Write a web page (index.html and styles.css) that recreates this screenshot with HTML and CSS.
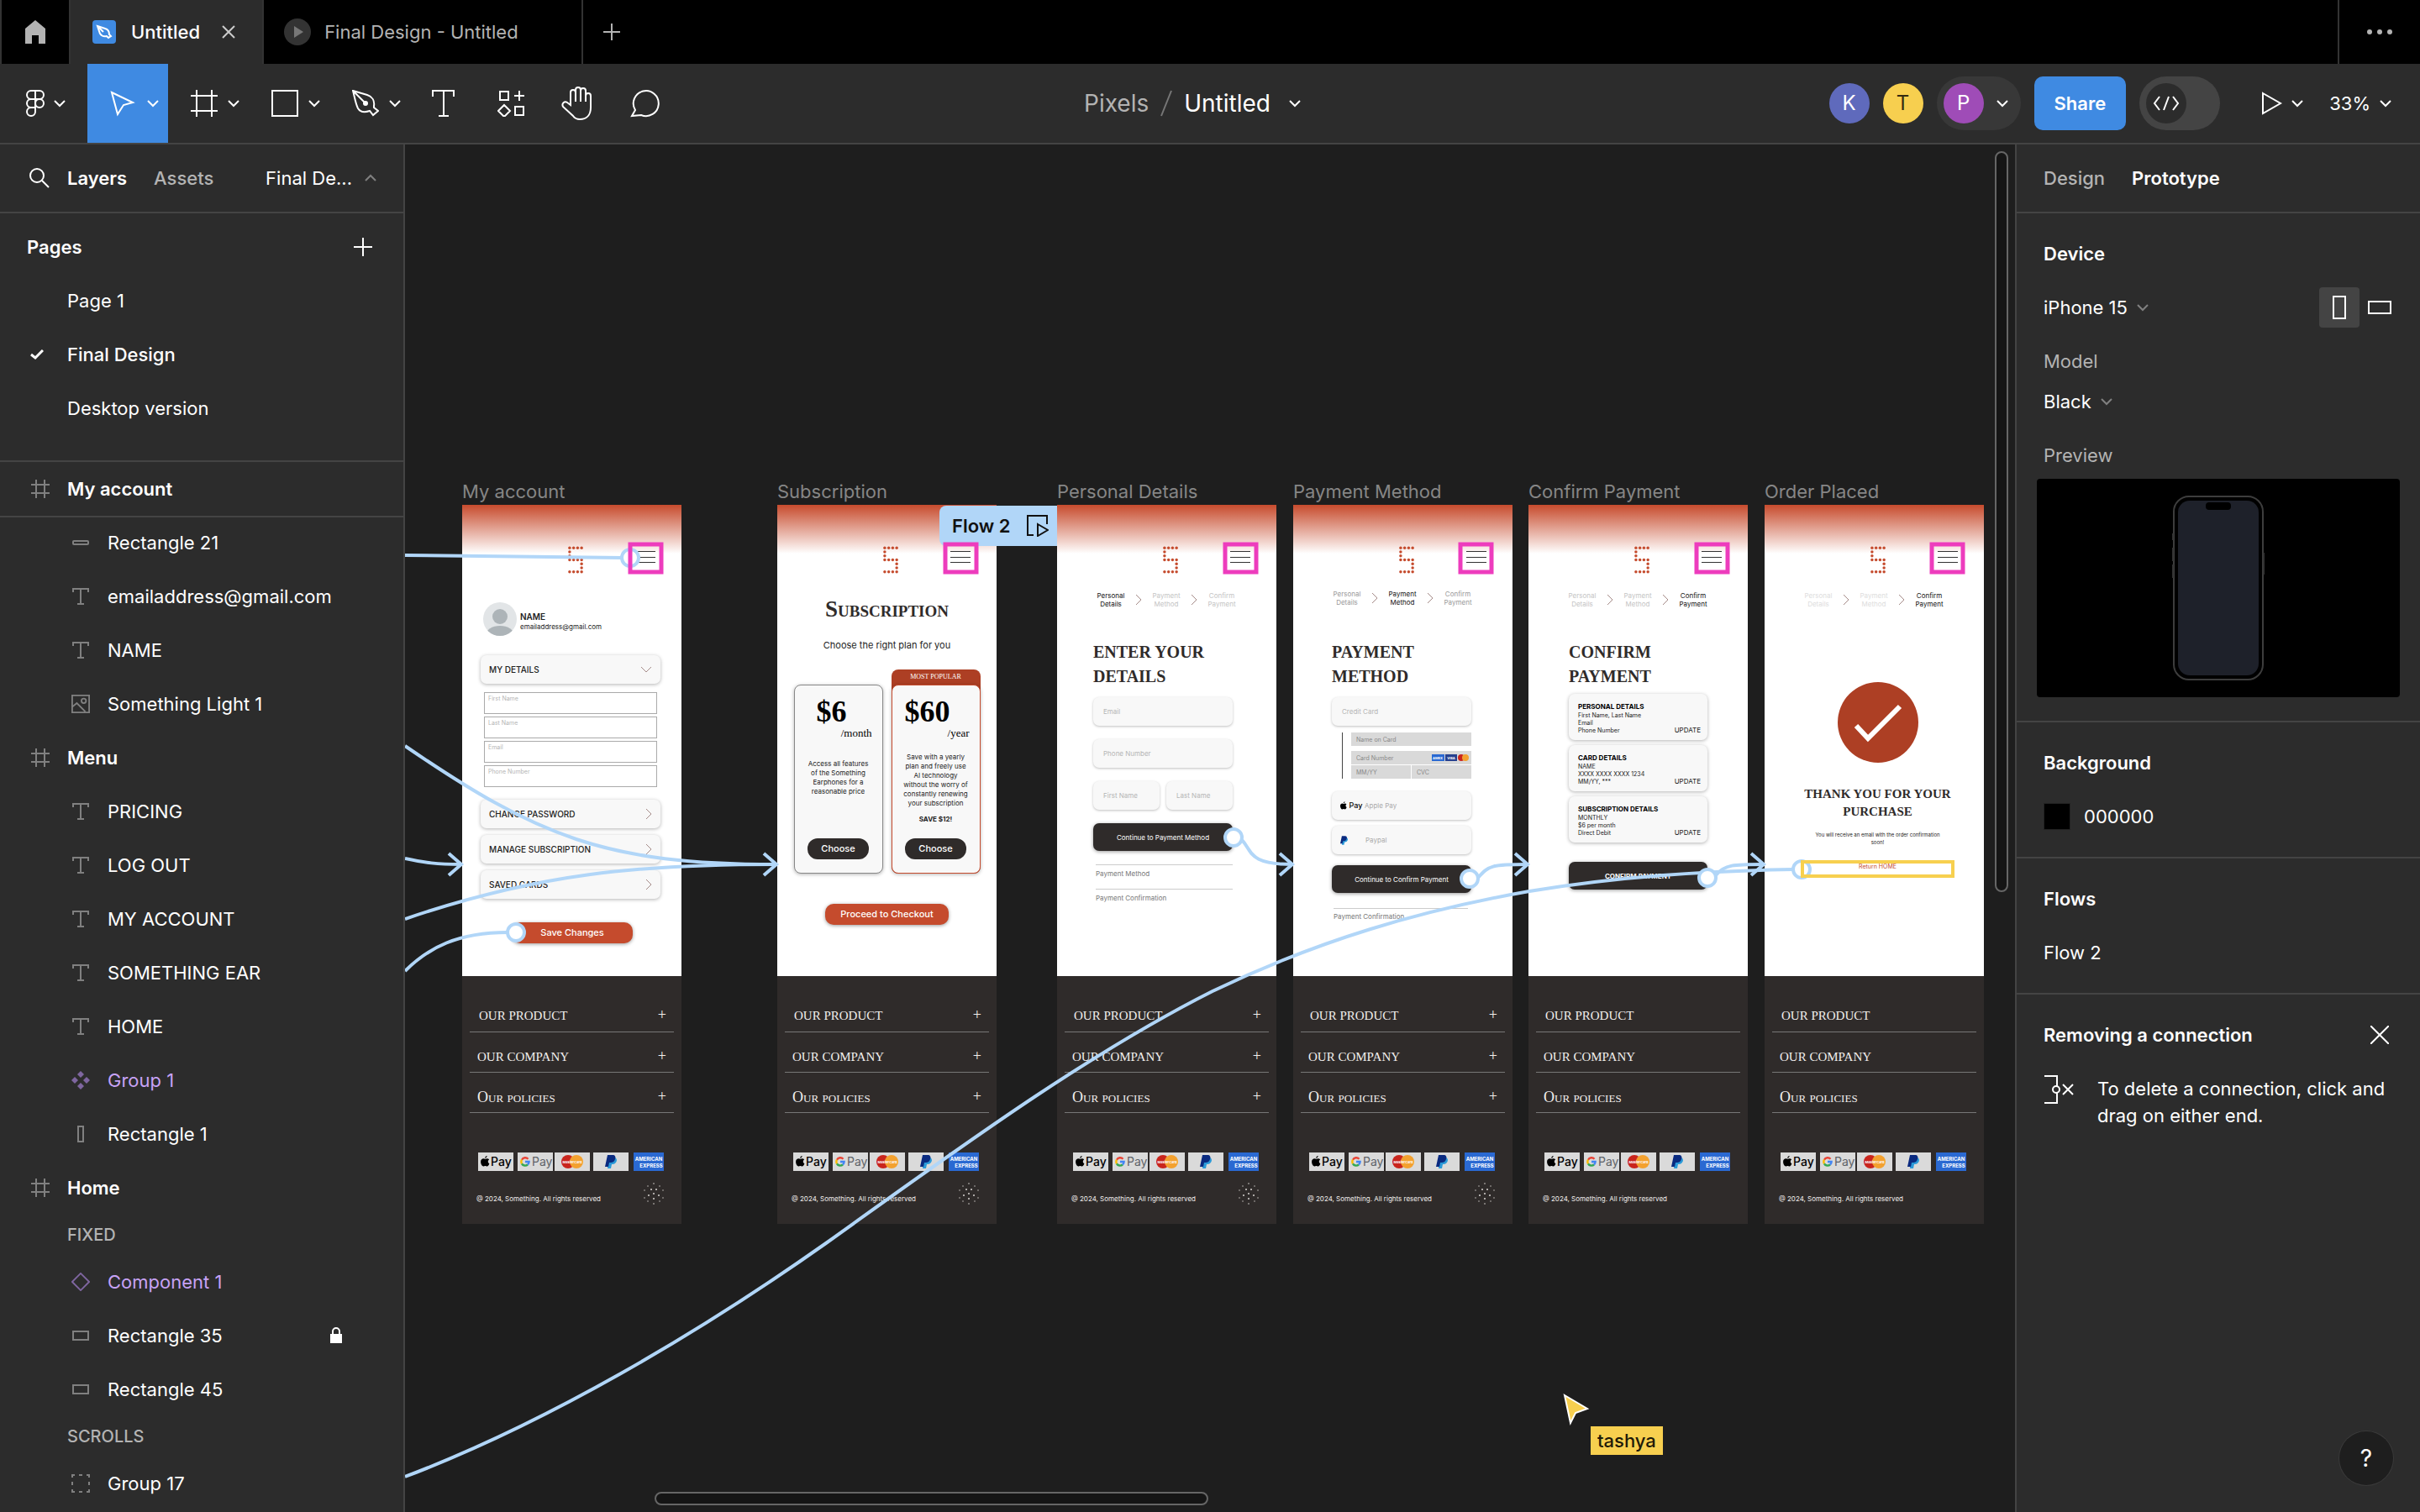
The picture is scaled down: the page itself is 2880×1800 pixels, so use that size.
FILE: index.html
```html
<!DOCTYPE html>
<html lang="en">
<head>
    <meta charset="UTF-8">
    <title>Untitled</title>
    <link rel="stylesheet" href="styles.css">
</head>
<body>
    <svg class="sprite" aria-hidden="true">
        <symbol id="chevron" viewBox="0 0 14 14"><path d="M1 4l6 6 6-6"/></symbol>
        <symbol id="chevron-up" viewBox="0 0 14 14"><path d="M1 10l6-6 6 6"/></symbol>
        <symbol id="figma" viewBox="0 0 32 32"><path d="M16 1h-5a5 5 0 0 0 0 10h5zM16 1h5a5 5 0 0 1 0 10h-5zM16 11h-5a5 5 0 0 0 0 10h5zM21 11a5 5 0 1 1 0 10a5 5 0 1 1 0-10zM16 21h-5a5 5 0 1 0 5 5z"/></symbol>
        <symbol id="cursor" viewBox="0 0 32 32"><path d="M2 3l25 12-11 3-7 11z"/></symbol>
        <symbol id="frame" viewBox="0 0 32 32"><path d="M7 0v32M25 0v32M0 7h32M0 25h32"/></symbol>
        <symbol id="rect" viewBox="0 0 32 32"><path d="M1 1h30v30H1z"/></symbol>
        <symbol id="pen" viewBox="0 0 32 32"><path d="M1 1l17 5c6 2 9 7 8 13v2l5 4-6 5-4-5c-6 2-11 2-14-3-3-6-4-14-6-21zM1 1l14 14"/><circle cx="16" cy="16" r="3" fill="currentColor" stroke="none"/></symbol>
        <symbol id="text" viewBox="0 0 32 32"><path d="M3 8V1h25v7M16 1v30M10 31h12"/></symbol>
        <symbol id="components" viewBox="0 0 32 32"><path d="M3 2h10v10H3zM26 1v12M20 7h12M21 20h10v10H21zM8 18l7 7-7 7-7-7z"/></symbol>
        <symbol id="hand" viewBox="0 0 40 40"><path d="M11 22V7a3 3 0 0 1 6 0v11V4a3 3 0 0 1 6 0v14V5a3 3 0 0 1 6 0v13v-7a3 3 0 0 1 6 0v14c0 9-5 14-13 14-4 0-6-1-8-4L2 24c-2-4 2-7 5-5l4 3z"/></symbol>
        <symbol id="comment" viewBox="0 0 36 36"><path d="M2 33l4-7a15 15 0 1 1 7 6z"/></symbol>
        <symbol id="layer-frame" viewBox="0 0 22 22"><path d="M6 0v22M16 0v22M0 6h22M0 16h22"/></symbol>
        <symbol id="layer-text" viewBox="0 0 22 22"><path d="M2 6V2h18v4M11 2v18M7 20h8"/></symbol>
        <symbol id="layer-line" viewBox="0 0 22 22"><rect x="2" y="9" width="18" height="4" rx="1"/></symbol>
        <symbol id="layer-image" viewBox="0 0 24 24"><path d="M1 1h22v22H1zM1 16l6-5 11 11"/><circle cx="16" cy="8" r="3"/></symbol>
        <symbol id="layer-instance" viewBox="0 0 22 22"><path d="M11 0l4 4-4 4-4-4zM11 14l4 4-4 4-4-4zM4 7l4 4-4 4-4-4zM18 7l4 4-4 4-4-4z" fill="currentColor" stroke="none"/></symbol>
        <symbol id="layer-tall" viewBox="0 0 22 22"><path d="M8 2h6v18H8z"/></symbol>
        <symbol id="layer-component" viewBox="0 0 24 24"><path d="M12 1l11 11-11 11L1 12z"/></symbol>
        <symbol id="layer-wide" viewBox="0 0 22 22"><path d="M2 6h18v10H2z"/></symbol>
        <symbol id="layer-group" viewBox="0 0 22 22"><path d="M1 4V1h3M9 1h4M18 1h3v3M21 9v4M21 18v3h-3M13 21H9M4 21H1v-3M1 13V9"/></symbol>
        <symbol id="logo-s" viewBox="0 0 20 34">
            <g fill="#c54b2d" stroke="none">
                <circle cx="2" cy="2" r="1.800"/><circle cx="7" cy="2" r="1.800"/><circle cx="12" cy="2" r="1.800"/><circle cx="17" cy="2" r="1.800"/>
                <circle cx="2" cy="7" r="1.800"/><circle cx="2" cy="12" r="1.800"/>
                <circle cx="2" cy="17" r="1.800"/><circle cx="7" cy="17" r="1.800"/><circle cx="12" cy="17" r="1.800"/><circle cx="17" cy="17" r="1.800"/>
                <circle cx="17" cy="22" r="1.800"/><circle cx="17" cy="27" r="1.800"/>
                <circle cx="2" cy="32" r="1.800"/><circle cx="7" cy="32" r="1.800"/><circle cx="12" cy="32" r="1.800"/><circle cx="17" cy="32" r="1.800"/>
            </g>
        </symbol>
        <symbol id="burger" viewBox="0 0 24 16"><path d="M0 1.500h24M0 8.500h24M0 14.500h24" stroke="#333" stroke-width="1"/></symbol>
        <symbol id="angle" viewBox="0 0 8 14"><path d="M1 1l6 6-6 6" stroke="#a58b88" stroke-width="1"/></symbol>
        <symbol id="apple" viewBox="0 0 10 12"><path d="M7 0c0 1-1 2.500-2.300 2.500C4.600 1.300 5.800.2 7 0zM9.500 8.500C9 10 8 11.500 7 11.500S5.800 11 5 11s-1.200.5-2 .5C1.500 11.500 0 9 0 6.500 0 4 1.500 3 3 3c.8 0 1.400.5 2 .5S6.300 3 7.200 3c.8 0 1.600.4 2.100 1.100-1.800 1-1.500 3.600.2 4.400z" fill="#000" stroke="none"/></symbol>
        <symbol id="paypal" viewBox="0 0 14 16"><path d="M4 3h7c3 0 3.500 3 2.500 5S11 11 9 11H8l-1 5H3z" fill="#2b9ad8" stroke="none"/><path d="M3 0h6c3 0 4 2 3 5s-3 4-5 4H5l-1 5H0z" fill="#0a2a80" stroke="none"/></symbol>
        <symbol id="mastercard" viewBox="0 0 28 18"><circle cx="9" cy="9" r="8" fill="#c9251d" stroke="none"/><circle cx="19" cy="9" r="8" fill="#f3a12f" stroke="none"/><text x="14" y="11" class="tiny-mark" text-anchor="middle">MasterCard</text></symbol>
        <symbol id="google" viewBox="0 0 12 12"><g stroke-width="2.400"><path d="M9.500 2.800A4.600 4.600 0 0 0 2 3.700" stroke="#e94335"/><path d="M2 3.700a4.600 4.600 0 0 0 0 4.600" stroke="#fabb05"/><path d="M2 8.300a4.600 4.600 0 0 0 7 1.200" stroke="#34a853"/><path d="M9 9.500A4.600 4.600 0 0 0 10.600 6H6" stroke="#4285f4"/></g></symbol>
        <symbol id="payments" viewBox="0 0 222 22">
            <g stroke="none">
                <path d="M0 0h42v22H0zM47 0h42v22H47zM91 0h42v22H91zM137 0h42v22h-42z" fill="#dadada"/>
                <path d="M185 0h36v22h-36z" fill="#2a69d2"/>
                <text x="15" y="16" class="pay-mark">Pay</text>
                <text x="64" y="16" class="pay-mark pay-mark-gray">Pay</text>
                <text x="203" y="10" class="amex-mark" text-anchor="middle">AMERICAN</text>
                <text x="206" y="18" class="amex-mark" text-anchor="middle">EXPRESS</text>
            </g>
            <use href="#apple" x="3" y="4" width="11" height="13"/>
            <use href="#google" x="50" y="5" width="12" height="12"/>
            <use href="#mastercard" x="98" y="2" width="28" height="18"/>
            <use href="#paypal" x="151" y="3" width="14" height="16"/>
        </symbol>
        <symbol id="sparkle" viewBox="0 0 24 26"><g fill="#d8d4d2" stroke="none"><circle cx="12" cy="1" r=".800"/><circle cx="5" cy="4" r=".700"/><circle cx="19" cy="4" r=".700"/><circle cx="9" cy="8" r="1"/><circle cx="15" cy="8" r="1"/><circle cx="1" cy="9" r=".700"/><circle cx="23" cy="9" r=".700"/><circle cx="12" cy="13" r="1"/><circle cx="6" cy="15" r="1"/><circle cx="18" cy="15" r="1"/><circle cx="1" cy="18" r=".700"/><circle cx="23" cy="18" r=".700"/><circle cx="12" cy="19" r="1"/><circle cx="5" cy="22" r=".700"/><circle cx="19" cy="22" r=".700"/><circle cx="12" cy="25" r=".800"/></g></symbol>
    </svg>

    <nav class="tabs">
        <button class="tab tab-home" aria-label="Home">
            <svg width="24" height="28" viewBox="0 0 24 28"><path d="M12 0l12 10v18h-8V18H8v10H0V10z" fill="#b3b3b3" stroke="none"/></svg>
        </button>
        <div class="tab tab-active">
            <svg class="file-icon" width="28" height="28" viewBox="0 0 28 28"><rect width="28" height="28" rx="4" fill="#3f8ae2" stroke="none"/><path d="M6 7l9 3c4 1 5 4 5 7l2 2-3 2-2-2c-4 1-6 0-8-3zM6 7l7 7" stroke="#fff"/></svg>
            <a href="#">Untitled</a>
            <button class="icon-button" aria-label="Close tab"><svg width="18" height="18" viewBox="0 0 18 18"><path d="M2 2l14 14M16 2L2 16"/></svg></button>
        </div>
        <div class="tab tab-second">
            <svg width="32" height="32" viewBox="0 0 32 32"><circle cx="16" cy="16" r="16" fill="#333" stroke="none"/><path d="M12 9l11 7-11 7z" fill="#777" stroke="none"/></svg>
            <a href="#">Final Design - Untitled</a>
        </div>
        <button class="tab-add" aria-label="New tab"><svg width="20" height="20" viewBox="0 0 20 20"><path d="M10 0v20M0 10h20"/></svg></button>
        <button class="tab-more" aria-label="More"><svg width="32" height="8" viewBox="0 0 32 8"><g fill="#b3b3b3" stroke="none"><circle cx="4" cy="4" r="3"/><circle cx="16" cy="4" r="3"/><circle cx="28" cy="4" r="3"/></g></svg></button>
    </nav>

    <header class="toolbar">
        <div class="tools">
            <button class="tool tool-menu" aria-label="Main menu"><svg class="i32"><use href="#figma"/></svg><svg class="i14"><use href="#chevron"/></svg></button>
            <button class="tool tool-drop tool-active" aria-label="Move"><svg class="i32"><use href="#cursor"/></svg><svg class="i14"><use href="#chevron"/></svg></button>
            <button class="tool tool-drop" aria-label="Frame"><svg class="i32"><use href="#frame"/></svg><svg class="i14"><use href="#chevron"/></svg></button>
            <button class="tool tool-drop" aria-label="Shapes"><svg class="i32"><use href="#rect"/></svg><svg class="i14"><use href="#chevron"/></svg></button>
            <button class="tool tool-drop" aria-label="Pen"><svg class="i32"><use href="#pen"/></svg><svg class="i14"><use href="#chevron"/></svg></button>
            <button class="tool" aria-label="Text"><svg class="i32"><use href="#text"/></svg></button>
            <button class="tool" aria-label="Resources"><svg class="i32"><use href="#components"/></svg></button>
            <button class="tool" aria-label="Hand"><svg class="i40"><use href="#hand"/></svg></button>
            <button class="tool" aria-label="Comment"><svg class="i36"><use href="#comment"/></svg></button>
        </div>
        <div class="file-name">
            <a class="muted" href="#">Pixels</a>
            <svg width="14" height="32" viewBox="0 0 14 32"><path d="M1 31L13 1" stroke="#777"/></svg>
            <button class="file-button">Untitled <svg class="i14"><use href="#chevron"/></svg></button>
        </div>
        <div class="actions">
            <span class="avatar avatar-k">K</span>
            <span class="avatar avatar-t">T</span>
            <button class="me"><span class="avatar avatar-p">P</span><svg class="i14"><use href="#chevron"/></svg></button>
            <button class="share">Share</button>
            <label class="dev-mode">
                <input type="checkbox" aria-label="Dev mode">
                <span class="dev-knob"><svg width="32" height="18" viewBox="0 0 32 18"><path d="M8 1L2 9l6 8M24 1l6 8-6 8M19 1l-6 16"/></svg></span>
            </label>
            <button class="drop present" aria-label="Present"><svg width="24" height="28" viewBox="0 0 24 28"><path d="M1 2l21 12L1 26z"/></svg><svg class="i14"><use href="#chevron"/></svg></button>
            <button class="drop">33% <svg class="i14"><use href="#chevron"/></svg></button>
        </div>
    </header>

    <div class="workspace">
        <aside class="panel panel-left">
            <div class="panel-head">
                <button class="icon-button" aria-label="Search"><svg width="24" height="24" viewBox="0 0 24 24"><circle cx="9" cy="9" r="8"/><path d="M15 15l8 8"/></svg></button>
                <button class="panel-tab selected">Layers</button>
                <button class="panel-tab">Assets</button>
                <button class="page-switch">Final De... <svg class="i14 dim"><use href="#chevron-up"/></svg></button>
            </div>
            <section class="pages">
                <div class="pages-title"><h2>Pages</h2><button class="icon-button" aria-label="Add page"><svg width="22" height="22" viewBox="0 0 22 22"><path d="M11 0v22M0 11h22"/></svg></button></div>
                <ul>
                    <li class="row">Page 1</li>
                    <li class="row current"><svg class="row-check" width="16" height="12" viewBox="0 0 16 12"><path d="M1 6l5 4 9-9" stroke-width="3"/></svg>Final Design</li>
                    <li class="row">Desktop version</li>
                </ul>
            </section>
            <ul class="layers">
                <li class="row top-row sticky"><svg class="i22"><use href="#layer-frame"/></svg>My account</li>
                <li class="row child"><svg class="i22"><use href="#layer-line"/></svg>Rectangle 21</li>
                <li class="row child"><svg class="i22"><use href="#layer-text"/></svg>emailaddress@gmail.com</li>
                <li class="row child"><svg class="i22"><use href="#layer-text"/></svg>NAME</li>
                <li class="row child"><svg class="i22"><use href="#layer-image"/></svg>Something Light 1</li>
                <li class="row top-row"><svg class="i22"><use href="#layer-frame"/></svg>Menu</li>
                <li class="row child"><svg class="i22"><use href="#layer-text"/></svg>PRICING</li>
                <li class="row child"><svg class="i22"><use href="#layer-text"/></svg>LOG OUT</li>
                <li class="row child"><svg class="i22"><use href="#layer-text"/></svg>MY ACCOUNT</li>
                <li class="row child"><svg class="i22"><use href="#layer-text"/></svg>SOMETHING EAR</li>
                <li class="row child"><svg class="i22"><use href="#layer-text"/></svg>HOME</li>
                <li class="row child purple"><svg class="i22"><use href="#layer-instance"/></svg>Group 1</li>
                <li class="row child"><svg class="i22"><use href="#layer-tall"/></svg>Rectangle 1</li>
                <li class="row top-row"><svg class="i22"><use href="#layer-frame"/></svg>Home</li>
                <li class="group-label">FIXED</li>
                <li class="row child purple"><svg class="i22"><use href="#layer-component"/></svg>Component 1</li>
                <li class="row child"><svg class="i22"><use href="#layer-wide"/></svg>Rectangle 35
                    <svg class="lock" width="14" height="20" viewBox="0 0 14 20"><path d="M0 8h14v11H0z" fill="#fff" stroke="none"/><path d="M3 9V5a4 4 0 0 1 8 0v4"/></svg></li>
                <li class="row child"><svg class="i22"><use href="#layer-wide"/></svg>Rectangle 45</li>
                <li class="group-label">SCROLLS</li>
                <li class="row child"><svg class="i22"><use href="#layer-group"/></svg>Group 17</li>
            </ul>
        </aside>

        <main class="canvas">
            <article class="artboard at-account">
                <h3>My account</h3>
                <div class="screen">
                    <div class="screen-top"><svg class="logo"><use href="#logo-s"/></svg><svg class="burger"><use href="#burger"/></svg></div>
                    <div class="screen-body account">
                        <div class="profile">
                            <svg width="40" height="40" viewBox="0 0 40 40"><clipPath id="face"><circle cx="20" cy="20" r="20"/></clipPath><g clip-path="url(#face)" stroke="none"><path d="M0 0h40v40H0z" fill="#e2e5e7"/><circle cx="20" cy="17" r="9" fill="#adb4b8"/><ellipse cx="20" cy="39" rx="17" ry="11" fill="#adb4b8"/></g></svg>
                            <div><strong>NAME</strong><span>emailaddress@gmail.com</span></div>
                        </div>
                        <button class="soft-card">MY DETAILS <svg class="i14 warm"><use href="#chevron"/></svg></button>
                        <div class="line-fields">
                            <input type="text" placeholder="First Name" aria-label="First Name">
                            <input type="text" placeholder="Last Name" aria-label="Last Name">
                            <input type="text" placeholder="Email" aria-label="Email">
                            <input type="text" placeholder="Phone Number" aria-label="Phone Number">
                        </div>
                        <div class="soft-list">
                            <button class="soft-card">CHANGE PASSWORD <svg class="angle"><use href="#angle"/></svg></button>
                            <button class="soft-card">MANAGE SUBSCRIPTION <svg class="angle"><use href="#angle"/></svg></button>
                            <button class="soft-card">SAVED CARDS <svg class="angle"><use href="#angle"/></svg></button>
                        </div>
                        <button class="cta save">Save Changes</button>
                    </div>
                    <footer class="site-footer">
                        <p class="inset">OUR PRODUCT <span>+</span></p><p>OUR COMPANY <span>+</span></p><p class="caps">Our policies <span>+</span></p>
                        <svg class="payments"><use href="#payments"/></svg>
                        <small>@ 2024, Something. All rights reserved <svg class="sparkle"><use href="#sparkle"/></svg></small>
                    </footer>
                </div>
            </article>

            <article class="artboard at-subscription">
                <h3>Subscription</h3>
                <div class="screen">
                    <div class="screen-top"><svg class="logo"><use href="#logo-s"/></svg><svg class="burger"><use href="#burger"/></svg></div>
                    <div class="screen-body subscription">
                        <h4 class="sub-title">Subscription</h4>
                        <p class="sub-note">Choose the right plan for you</p>
                        <div class="plans">
                            <div class="plan">
                                <b class="price">$6</b><span class="period">/month</span>
                                <p>Access all features<br>of the Something<br>Earphones for a<br>reasonable price</p>
                                <button class="choose">Choose</button>
                            </div>
                            <div class="popular">
                                <span class="popular-tag">MOST POPULAR</span>
                                <div class="plan plan-year">
                                    <b class="price">$60</b><span class="period">/year</span>
                                    <p>Save with a yearly<br>plan and freely use<br>AI technology<br>without the worry of<br>constantly renewing<br>your subscription</p>
                                    <strong>SAVE $12!</strong>
                                    <button class="choose">Choose</button>
                                </div>
                            </div>
                        </div>
                        <button class="cta">Proceed to Checkout</button>
                    </div>
                    <footer class="site-footer">
                        <p class="inset">OUR PRODUCT <span>+</span></p><p>OUR COMPANY <span>+</span></p><p class="caps">Our policies <span>+</span></p>
                        <svg class="payments"><use href="#payments"/></svg>
                        <small>@ 2024, Something. All rights reserved <svg class="sparkle"><use href="#sparkle"/></svg></small>
                    </footer>
                </div>
            </article>

            <article class="artboard at-details">
                <h3>Personal Details</h3>
                <div class="screen">
                    <div class="screen-top"><svg class="logo"><use href="#logo-s"/></svg><svg class="burger"><use href="#burger"/></svg></div>
                    <div class="screen-body checkout">
                        <div class="steps"><span class="on">Personal<br>Details</span><svg class="angle"><use href="#angle"/></svg><span>Payment<br>Method</span><svg class="angle"><use href="#angle"/></svg><span>Confirm<br>Payment</span></div>
                        <h4>ENTER YOUR<br>DETAILS</h4>
                        <form class="fields">
                            <input type="email" placeholder="Email" aria-label="Email">
                            <input type="tel" placeholder="Phone Number" aria-label="Phone Number">
                            <div class="pair"><input type="text" placeholder="First Name" aria-label="First Name"><input type="text" placeholder="Last Name" aria-label="Last Name"></div>
                            <button type="button" class="next">Continue to Payment Method</button>
                        </form>
                        <div class="later"><p>Payment Method</p><p>Payment Confirmation</p></div>
                    </div>
                    <footer class="site-footer">
                        <p class="inset">OUR PRODUCT <span>+</span></p><p>OUR COMPANY <span>+</span></p><p class="caps">Our policies <span>+</span></p>
                        <svg class="payments"><use href="#payments"/></svg>
                        <small>@ 2024, Something. All rights reserved <svg class="sparkle"><use href="#sparkle"/></svg></small>
                    </footer>
                </div>
            </article>

            <article class="artboard at-payment">
                <h3>Payment Method</h3>
                <div class="screen">
                    <div class="screen-top"><svg class="logo"><use href="#logo-s"/></svg><svg class="burger"><use href="#burger"/></svg></div>
                    <div class="screen-body checkout method">
                        <div class="steps steps-mid"><span>Personal<br>Details</span><svg class="angle"><use href="#angle"/></svg><span class="on">Payment<br>Method</span><svg class="angle"><use href="#angle"/></svg><span>Confirm<br>Payment</span></div>
                        <h4>PAYMENT<br>METHOD</h4>
                        <form class="fields">
                            <input type="text" placeholder="Credit Card" aria-label="Credit Card">
                            <div class="card-form">
                                <input type="text" placeholder="Name on Card" aria-label="Name on Card">
                                <div class="card-number">
                                    <input type="text" placeholder="Card Number" aria-label="Card Number">
                                    <svg class="brands" width="44" height="10" viewBox="0 0 44 10"><g stroke="none"><path d="M0 1h15v8H0z" fill="#2a69d2"/><path d="M16 1h14v8H16z" fill="#26408f"/><text x="23" y="7" text-anchor="middle" class="tiny-mark">VISA</text><text x="7" y="7" text-anchor="middle" class="tiny-mark">AMEX</text><circle cx="35" cy="5" r="4" fill="#c9251d"/><circle cx="40" cy="5" r="4" fill="#f3a12f"/></g></svg>
                                </div>
                                <div class="card-pair"><input type="text" placeholder="MM/YY" aria-label="MM/YY"><input type="text" placeholder="CVC" aria-label="CVC"></div>
                            </div>
                            <button type="button" class="pay-option"><svg width="8" height="10"><use href="#apple"/></svg><b>Pay</b><span>Apple Pay</span></button>
                            <button type="button" class="pay-option"><svg width="9" height="11"><use href="#paypal"/></svg><b></b><span>Paypal</span></button>
                            <button type="button" class="next">Continue to Confirm Payment</button>
                        </form>
                        <div class="later"><p>Payment Confirmation</p></div>
                    </div>
                    <footer class="site-footer">
                        <p class="inset">OUR PRODUCT <span>+</span></p><p>OUR COMPANY <span>+</span></p><p class="caps">Our policies <span>+</span></p>
                        <svg class="payments"><use href="#payments"/></svg>
                        <small>@ 2024, Something. All rights reserved <svg class="sparkle"><use href="#sparkle"/></svg></small>
                    </footer>
                </div>
            </article>

            <article class="artboard at-confirm">
                <h3>Confirm Payment</h3>
                <div class="screen">
                    <div class="screen-top"><svg class="logo"><use href="#logo-s"/></svg><svg class="burger"><use href="#burger"/></svg></div>
                    <div class="screen-body checkout confirm">
                        <div class="steps"><span>Personal<br>Details</span><svg class="angle"><use href="#angle"/></svg><span>Payment<br>Method</span><svg class="angle"><use href="#angle"/></svg><span class="on">Confirm<br>Payment</span></div>
                        <h4>CONFIRM<br>PAYMENT</h4>
                        <div class="summary"><div><strong>PERSONAL DETAILS</strong>First Name, Last Name<br>Email<br>Phone Number</div><a href="#">UPDATE</a></div>
                        <div class="summary"><div><strong>CARD DETAILS</strong>NAME<br>XXXX XXXX XXXX 1234<br>MM/YY, ***</div><a href="#">UPDATE</a></div>
                        <div class="summary"><div><strong>SUBSCRIPTION DETAILS</strong>MONTHLY<br>$6 per month<br>Direct Debit</div><a href="#">UPDATE</a></div>
                        <button class="next next-confirm">CONFIRM PAYMENT</button>
                    </div>
                    <footer class="site-footer">
                        <p class="inset">OUR PRODUCT</p><p>OUR COMPANY</p><p class="caps">Our policies</p>
                        <svg class="payments"><use href="#payments"/></svg>
                        <small>@ 2024, Something. All rights reserved</small>
                    </footer>
                </div>
            </article>

            <article class="artboard at-order">
                <h3>Order Placed</h3>
                <div class="screen">
                    <div class="screen-top"><svg class="logo"><use href="#logo-s"/></svg><svg class="burger"><use href="#burger"/></svg></div>
                    <div class="screen-body checkout order">
                        <div class="steps steps-faint"><span>Personal<br>Details</span><svg class="angle"><use href="#angle"/></svg><span>Payment<br>Method</span><svg class="angle"><use href="#angle"/></svg><span class="on">Confirm<br>Payment</span></div>
                        <svg class="done" width="96" height="96" viewBox="0 0 96 96"><circle cx="48" cy="48" r="48" fill="#ad3f24" stroke="none"/><path d="M22 52l14 15 38-38" stroke="#fff" stroke-width="6"/></svg>
                        <h4>THANK YOU FOR YOUR<br>PURCHASE</h4>
                        <p class="order-note">You will receive an email with the order confirmation<br>soon!</p>
                        <a class="return" href="#">Return HOME</a>
                    </div>
                    <footer class="site-footer">
                        <p class="inset">OUR PRODUCT</p><p>OUR COMPANY</p><p class="caps">Our policies</p>
                        <svg class="payments"><use href="#payments"/></svg>
                        <small>@ 2024, Something. All rights reserved</small>
                    </footer>
                </div>
            </article>

            <button class="flow-badge">Flow 2
                <svg width="26" height="26" viewBox="0 0 26 26"><path d="M8 24H1V1h23v10M13 11l12 7-12 7z"/></svg>
            </button>

            <!-- prototype connections, in window coordinates -->
            <svg class="noodles">
                <g transform="translate(-482 -172)">
                    <g stroke="#b1d6f8" stroke-width="4">
                        <path d="M482 661L740 664"/>
                        <path d="M482 888C640 996 720 1029 924 1029"/>
                        <path d="M482 1022C505 1027 520 1029 549 1029"/>
                        <path d="M482 1094C640 1040 760 1029 924 1029"/>
                        <path d="M482 1156C510 1128 545 1110 604 1110"/>
                        <path d="M1478 1000C1490 1012 1484 1029 1538 1029"/>
                        <path d="M1759 1045C1772 1030 1776 1029 1818 1029"/>
                        <path d="M2042 1042C2052 1029 2064 1029 2098 1029"/>
                        <path d="M482 1758C650 1694 830 1588 983 1480C1130 1375 1290 1257 1443 1180C1570 1119 1690 1084 1820 1061C1930 1043 2030 1037 2134 1035"/>
                        <path d="M534 1016l15 13-15 13M909 1016l15 13-15 13M1523 1016l15 13-15 13M1803 1016l15 13-15 13M2084 1016l15 13-15 13"/>
                        <g fill="#fff">
                            <circle cx="750" cy="664" r="10"/>
                            <circle cx="614" cy="1110" r="10"/>
                            <circle cx="1468" cy="997" r="10"/>
                            <circle cx="1749" cy="1046" r="10"/>
                            <circle cx="2032" cy="1045" r="10"/>
                            <circle cx="2144" cy="1035" r="10"/>
                        </g>
                    </g>
                    <g stroke="#ed3cbd" stroke-width="5">
                        <path d="M750 648h37v33h-37zM1125 648h37v33h-37zM1458 648h37v33h-37zM1738 648h37v33h-37zM2019 648h37v33h-37zM2299 648h37v33h-37z"/>
                    </g>
                    <path d="M2145 1026h179v17h-179z" stroke="#f7d04f" stroke-width="4"/>
                </g>
            </svg>

            <div class="guest">
                <svg width="34" height="40" viewBox="0 0 34 40"><path d="M3 3l27 16-14 5-6 12z" fill="#f7cf4f"/></svg>
                <span>tashya</span>
            </div>
            <div class="scroll-y"></div>
            <div class="scroll-x"></div>
        </main>

        <aside class="panel panel-right">
            <div class="panel-head">
                <button class="panel-tab">Design</button>
                <button class="panel-tab selected">Prototype</button>
            </div>
            <section class="device">
                <h2 class="prop">Device</h2>
                <div class="prop device-row">
                    <span class="picker"><select aria-label="Device"><option>iPhone 15</option></select><svg class="i14 dim"><use href="#chevron"/></svg></span>
                    <button class="orient orient-on" aria-label="Portrait"><svg width="16" height="28" viewBox="0 0 16 28"><path d="M1 1h14v26H1z"/></svg></button>
                    <button class="orient" aria-label="Landscape"><svg width="28" height="16" viewBox="0 0 28 16"><path d="M1 1h26v14H1z"/></svg></button>
                </div>
                <label class="prop muted" for="model">Model</label>
                <div class="model"><span class="picker"><select id="model"><option>Black</option></select><svg class="i14 dim"><use href="#chevron"/></svg></span></div>
                <p class="prop muted preview-label">Preview</p>
                <div class="preview">
                    <svg width="110" height="220" viewBox="0 0 110 220">
                        <rect x="2" y="1" width="106" height="218" rx="18" fill="#000" stroke="#3d3d3d"/>
                        <rect x="7" y="6" width="96" height="208" rx="14" fill="#1e212a" stroke="none"/>
                        <rect x="40" y="8" width="30" height="9" rx="4" fill="#000" stroke="none"/>
                        <path d="M1 45v8M1 62v16M1 82v16M109 68v26" stroke="#333"/>
                    </svg>
                </div>
            </section>
            <section class="block">
                <h2 class="prop">Background</h2>
                <p class="prop color"><i class="swatch"></i>000000</p>
            </section>
            <section class="block">
                <h2 class="prop">Flows</h2>
                <p class="prop">Flow 2</p>
            </section>
            <section class="block hint">
                <div class="prop hint-head"><h2>Removing a connection</h2><button class="icon-button" aria-label="Dismiss"><svg width="22" height="22" viewBox="0 0 22 22"><path d="M0 0l22 22M22 0L0 22"/></svg></button></div>
                <div class="hint-text">
                    <svg width="35" height="34" viewBox="0 0 35 34"><path d="M0 1h15v12M0 33h15V21M22 11l12 12M34 11L22 23"/><circle cx="14" cy="17" r="4"/></svg>
                    <p>To delete a connection, click and drag on either end.</p>
                </div>
            </section>
            <button class="help" aria-label="Help">?</button>
        </aside>
    </div>
</body>
</html>
```
FILE: styles.css
```css
* {
    box-sizing: border-box;
}
body {
    margin: 0;
    height: 100vh;
    display: flex;
    flex-direction: column;
    overflow: hidden;
    background: #1e1e1e;
    color: #fff;
    font-family: Inter, sans-serif;
    font-size: 22px;
    line-height: 32px;
}
h2, h3, h4, p, ul {
    margin: 0;
    padding: 0;
    font-size: inherit;
    font-weight: inherit;
}
li {
    list-style: none;
}
button, input, select {
    margin: 0;
    padding: 0;
    border: 0;
    background: none;
    color: inherit;
    font: inherit;
}
a {
    color: inherit;
    text-decoration: none;
}
svg {
    flex: none;
    fill: none;
    stroke: currentColor;
    stroke-width: 2px;
}
.sprite {
    display: none;
}
.i14 { width: 14px; height: 14px; }
.i22 { width: 22px; height: 22px; }
.i32 { width: 32px; height: 32px; }
.i36 { width: 36px; height: 36px; }
.i40 { width: 40px; height: 40px; }
.muted { color: #b3b3b3; }
.dim { color: #808080; }
.icon-button {
    display: flex;
}

/* tabs */
.tabs {
    display: flex;
    flex: none;
    height: 76px;
    background: #000;
    color: #b3b3b3;
    border-left: 2px solid #333;
}
.tab, .tab-add, .tab-more {
    display: flex;
    align-items: center;
    border-right: 2px solid #333;
}
.tab-home {
    width: 82px;
    justify-content: center;
}
.tab-active {
    gap: 18px;
    padding: 0 31px 0 26px;
    background: #2c2c2c;
    color: #fff;
    font-weight: 500;
}
.tab-active .icon-button {
    margin-left: 7px;
    color: #ccc;
}
.tab-second {
    gap: 16px;
    width: 380px;
    padding-left: 24px;
}
.tab-add {
    padding: 0 24px;
    border: 0;
}
.tab-more {
    margin-left: auto;
    padding: 0 32px;
    border-right: 0;
    border-left: 2px solid #333;
}

/* toolbar */
.toolbar {
    display: grid;
    grid-template-columns: 1fr auto 1fr;
    flex: none;
    height: 96px;
    background: #2c2c2c;
    border-bottom: 2px solid #444;
}
.tools, .actions, .file-name {
    display: flex;
    align-items: center;
}
.tool {
    display: flex;
    align-items: center;
    justify-content: center;
    gap: 12px;
    width: 80px;
    height: 94px;
}
.tool-drop {
    width: 96px;
    padding-left: 16px;
}
.tool-menu {
    width: 104px;
    gap: 6px;
}
.tool-active {
    background: #3f8ae2;
}
.file-name {
    gap: 14px;
    padding-right: 42px;
    font-size: 28px;
}
.file-button {
    display: flex;
    align-items: center;
    gap: 22px;
}
.actions {
    justify-content: flex-end;
    gap: 16px;
    padding-right: 34px;
}
.avatar {
    width: 48px;
    height: 48px;
    border-radius: 50%;
    font-size: 24px;
    line-height: 48px;
    text-align: center;
}
.avatar-k { background: #5f6abc; }
.avatar-t { background: #f7cf4f; color: #332b10; }
.avatar-p { background: #9f4cb7; }
.me {
    display: flex;
    align-items: center;
    gap: 15px;
    width: 100px;
    padding: 8px;
    border-radius: 32px;
    background: #383838;
}
.share {
    padding: 16px 24px;
    border-radius: 10px;
    background: #3f8ae2;
    font-weight: 600;
}
.dev-mode {
    display: flex;
    width: 96px;
    padding: 8px;
    border-radius: 32px;
    background: #444;
}
.dev-mode input {
    position: absolute;
    opacity: 0;
}
.dev-knob {
    display: flex;
    align-items: center;
    justify-content: center;
    width: 48px;
    height: 48px;
    border-radius: 50%;
    background: #2c2c2c;
}
.drop {
    display: flex;
    align-items: center;
    gap: 11px;
    margin-left: 15px;
}
.present {
    margin-left: 34px;
}

/* side panels */
.workspace {
    display: flex;
    flex: 1;
    min-height: 0;
}
.panel {
    flex: none;
    width: 482px;
    overflow: hidden;
    background: #2c2c2c;
}
.panel-left { border-right: 2px solid #444; }
.panel-right {
    position: relative;
    border-left: 2px solid #444;
}
.panel-head {
    display: flex;
    align-items: center;
    gap: 32px;
    height: 82px;
    padding: 0 32px;
    border-bottom: 2px solid #444;
}
.panel-left .panel-head {
    padding-left: 35px;
}
.panel-left .panel-head .icon-button {
    margin-right: -11px;
}
.panel-tab {
    color: #b3b3b3;
    font-weight: 500;
}
.panel-tab.selected, h2, .top-row {
    color: #fff;
    font-weight: 600;
}
.page-switch {
    display: flex;
    align-items: center;
    gap: 15px;
    margin-left: auto;
}
.pages {
    padding: 8px 0 30px;
    border-bottom: 2px solid #444;
}
.pages-title {
    display: flex;
    align-items: center;
    justify-content: space-between;
    height: 64px;
    padding: 0 37px 0 32px;
}
.row {
    display: flex;
    align-items: center;
    gap: 21px;
    height: 64px;
    padding-left: 80px;
}
.row.current {
    gap: 28px;
    padding-left: 36px;
    font-weight: 500;
}
.row svg {
    color: #808080;
}
.row .row-check {
    color: #fff;
}
.row.top-row {
    padding-left: 37px;
}
.row.child {
    padding-left: 85px;
}
.sticky {
    box-shadow: 0 2px #444;
}
.purple { color: #c7a2f5; }
.row.purple svg { color: #7f66a0; }
.row .lock {
    margin-left: auto;
    margin-right: 73px;
    color: #fff;
}
.group-label {
    height: 48px;
    padding-left: 80px;
    color: #b3b3b3;
    font-size: 20px;
    font-weight: 500;
    line-height: 48px;
}

.prop {
    display: flex;
    align-items: center;
    height: 64px;
    padding: 0 32px;
}
.device {
    padding: 16px 0 28px;
}
.device-row {
    padding-right: 24px;
}
.picker {
    display: flex;
    align-items: center;
    gap: 11px;
}
select {
    appearance: none;
}
.orient {
    display: flex;
    align-items: center;
    justify-content: center;
    width: 48px;
    height: 48px;
    border-radius: 4px;
}
.orient-on {
    margin-left: auto;
    background: #444;
}
.model {
    padding: 0 32px;
}
.preview-label {
    padding-top: 32px;
}
.preview {
    display: flex;
    justify-content: center;
    margin: 12px 24px 0;
    padding: 20px 0;
    border-radius: 4px;
    background: #000;
}
.block {
    padding: 16px 0;
    border-top: 2px solid #444;
}
.color { gap: 16px; }
.swatch {
    width: 32px;
    height: 32px;
    border: 1px solid #222;
    background: #000;
}
.hint-head {
    justify-content: space-between;
    padding-right: 37px;
}
.hint-text {
    display: flex;
    gap: 28px;
    padding: 16px 34px 0 33px;
}
.help {
    position: absolute;
    right: 32px;
    bottom: 32px;
    width: 64px;
    height: 64px;
    border-radius: 50%;
    background: #1e1e1e;
    box-shadow: 0 0 0 1px #3a3a3a;
    font-size: 28px;
}

/* canvas */
.canvas {
    position: relative;
    flex: 1;
    min-width: 0;
    overflow: hidden;
}
.artboard {
    position: absolute;
    top: 397px;
    width: 261px;
}
.at-account { left: 68px; }
.at-subscription { left: 443px; }
.at-details { left: 776px; }
.at-payment { left: 1057px; }
.at-confirm { left: 1337px; }
.at-order { left: 1618px; }
.artboard h3 {
    color: #868686;
    white-space: nowrap;
}
.noodles {
    position: absolute;
    inset: 0;
    width: 100%;
    height: 100%;
    pointer-events: none;
}
.flow-badge {
    display: flex;
    position: absolute;
    top: 430px;
    left: 636px;
    align-items: center;
    gap: 20px;
    height: 48px;
    padding: 0 10px 0 15px;
    border-radius: 8px 0 0 8px;
    background: #b1d6f8;
    color: #111;
    font-weight: 600;
}
.guest {
    position: absolute;
    top: 1486px;
    left: 1377px;
}
.guest svg {
    display: block;
}
.guest span {
    display: block;
    margin-left: 34px;
    padding: 1px 8px;
    background: #f7cf4f;
    color: #1e1a08;
    font-weight: 500;
}
.scroll-y, .scroll-x {
    position: absolute;
    border: 2px solid #666;
    border-radius: 8px;
    background: #151515;
}
.scroll-y {
    top: 8px;
    right: 8px;
    width: 16px;
    height: 882px;
}
.scroll-x {
    bottom: 8px;
    left: 297px;
    width: 659px;
    height: 16px;
}

/* phone screens */
.screen {
    display: flex;
    flex-direction: column;
    background: linear-gradient(#c74b2d, #fff 58px);
    color: #222;
    font-size: 8px;
    line-height: 10px;
}
.screen-top {
    display: flex;
    align-items: flex-start;
    justify-content: space-between;
    height: 100px;
    padding: 49px 31px 0 126px;
}
.logo {
    width: 19px;
    height: 33px;
}
.burger {
    width: 24px;
    height: 16px;
    margin-top: 5px;
}
.screen-body {
    display: flex;
    flex-direction: column;
    height: 461px;
}
.angle {
    width: 8px;
    height: 14px;
}
.warm { color: #a58b88; stroke-width: 1px; }

.account {
    padding: 16px 25px 0 22px;
}
.profile {
    display: flex;
    align-items: center;
    gap: 4px;
    margin: 0 0 23px 3px;
}
.profile div {
    padding-top: 3px;
}
.profile strong {
    display: block;
    font-size: 10px;
    font-weight: 600;
    line-height: 14px;
}
.soft-card {
    display: flex;
    align-items: center;
    justify-content: space-between;
    height: 34px;
    padding: 0 10px;
    border-radius: 7px;
    background: #f8f8f8;
    box-shadow: 0 1px 4px rgba(0, 0, 0, .3);
    font-size: 10px;
    font-weight: 500;
}
.line-fields {
    display: grid;
    gap: 3px;
    margin: 10px 4px 15px;
}
.line-fields input {
    width: 100%;
    height: 26px;
    padding: 0 4px 12px;
    border: 1px solid #aaa;
    font-size: 7px;
    line-height: 10px;
}
input::placeholder {
    color: #b5b5b5;
    opacity: 1;
}
.soft-list {
    display: grid;
    gap: 8px;
}
.cta {
    align-self: center;
    padding: 0 18px;
    border-radius: 10px;
    background: #c54b2d;
    box-shadow: 0 1px 4px rgba(0, 0, 0, .4);
    color: #fff;
    font-size: 11px;
    font-weight: 500;
    line-height: 25px;
}
.save {
    margin: 28px 0 0 4px;
    padding: 0 34px;
}

.subscription {
    padding-top: 10px;
    text-align: center;
}
.sub-title {
    color: #2f2b2a;
    font-family: "Liberation Serif", serif;
    font-size: 27px;
    font-variant: small-caps;
    font-weight: 700;
    line-height: 28px;
}
.sub-note {
    margin: 22px 0;
    font-size: 11px;
    line-height: 14px;
}
.plans {
    display: flex;
    align-items: flex-end;
    justify-content: center;
    gap: 10px;
    margin-bottom: 36px;
}
.plan {
    display: flex;
    flex-direction: column;
    align-items: center;
    width: 106px;
    height: 225px;
    padding: 12px 12px 16px;
    border: 1px solid #888;
    border-radius: 8px;
    background: #f8f8f8;
    box-shadow: 0 1px 4px rgba(0, 0, 0, .3);
    line-height: 11px;
}
.plan p {
    margin-top: 24px;
    white-space: nowrap;
}
.plan-year {
    border-color: #c54b2d;
}
.plan-year p {
    margin: 16px 0 8px;
}
.popular {
    border-radius: 8px;
    background: #ad3f24;
}
.popular-tag {
    display: block;
    color: #fff;
    font-family: "Liberation Serif", serif;
    line-height: 18px;
}
.price, .period {
    color: #000;
    font-family: "Liberation Serif", serif;
}
.price {
    align-self: flex-start;
    padding-left: 14px;
    font-size: 36px;
    font-weight: 700;
    line-height: 38px;
}
.plan-year .price {
    padding-left: 3px;
}
.period {
    align-self: flex-end;
    font-size: 13px;
    line-height: 14px;
}
.choose {
    margin-top: auto;
    padding: 0 16px;
    border-radius: 12px;
    background: #2f2b2a;
    color: #fff;
    font-size: 11px;
    font-weight: 500;
    line-height: 25px;
}

.checkout {
    padding: 3px 52px 0 43px;
}
.steps {
    display: flex;
    align-items: center;
    align-self: flex-start;
    gap: 11px;
    margin: 0 0 38px 3px;
    color: #c4c4c4;
    text-align: center;
}
.steps span {
    width: 36px;
}
.steps .on {
    color: #111;
}
.steps-mid { color: #999; }
.steps-faint { color: #ddd; }
.checkout h4 {
    color: #2f2b2a;
    font-family: "Liberation Serif", serif;
    font-size: 20px;
    font-weight: 700;
    line-height: 29px;
    white-space: nowrap;
}
.fields {
    display: grid;
    gap: 16px;
    margin-top: 10px;
}
.fields input {
    min-width: 0;
    width: 100%;
    height: 34px;
    padding: 0 12px;
    border-radius: 7px;
    background: #f8f8f8;
    box-shadow: 0 1px 3px rgba(0, 0, 0, .25);
}
.pair {
    display: grid;
    grid-template-columns: 1fr 1fr;
    gap: 8px;
}
.next {
    height: 33px;
    border-radius: 7px;
    background: #2f2b2a;
    box-shadow: 0 1px 4px rgba(0, 0, 0, .4);
    color: #fff;
}
.later {
    margin: 16px 0 0 3px;
    color: #777;
}
.later p {
    height: 29px;
    padding-top: 5px;
    border-top: 1px solid #ccc;
}
.method {
    padding: 1px 49px 0 46px;
}
.method .steps {
    margin: 0 0 40px;
}
.method .fields {
    gap: 7px;
}
.fields .card-form {
    margin: 1px 0 8px 12px;
    padding-left: 10px;
    border-left: 1px solid #444;
}
.card-form input {
    height: 16px;
    padding: 0 6px;
    border-radius: 0;
    background: #d9d9d9;
    box-shadow: none;
    font-size: 7px;
}
.card-form input::placeholder {
    color: #888;
}
.card-number {
    display: flex;
    position: relative;
    margin: 6px 0 1px;
}
.brands {
    position: absolute;
    top: 3px;
    right: 3px;
}
.card-pair {
    display: grid;
    grid-template-columns: 1fr 1fr;
    gap: 1px;
}
.pay-option {
    display: flex;
    align-items: center;
    height: 34px;
    padding: 0 10px;
    border-radius: 7px;
    background: #f8f8f8;
    box-shadow: 0 1px 3px rgba(0, 0, 0, .25);
    color: #aaa;
}
.pay-option b {
    width: 21px;
    color: #000;
    font-size: 9px;
    font-weight: 500;
}
.method .next {
    margin-top: 6px;
}
.method .later {
    margin: 18px 4px 0 2px;
}
.method .later p {
    padding-top: 4px;
}

.confirm {
    gap: 6px;
    padding: 3px 48px 0 48px;
}
.confirm .steps {
    margin: 0 0 32px -2px;
}
.summary {
    display: flex;
    align-items: flex-end;
    justify-content: space-between;
    height: 55px;
    padding: 0 8px 7px 11px;
    border-radius: 7px;
    background: #f8f8f8;
    box-shadow: 0 1px 4px rgba(0, 0, 0, .3);
    font-size: 7px;
    line-height: 9px;
}
.summary strong {
    display: block;
    color: #000;
    font-size: 8px;
    line-height: 11px;
}
.summary a {
    font-size: 8px;
}
.next-confirm {
    margin-top: 17px;
    font-weight: 700;
}

.order {
    align-items: center;
    padding: 3px 30px 0 38px;
    text-align: center;
}
.order .steps {
    margin: 0 0 88px 8px;
}
.order h4 {
    margin-top: 27px;
    font-size: 15px;
    line-height: 21px;
}
.order-note {
    margin: 12px 0 21px;
    font-size: 6px;
    line-height: 9px;
    white-space: nowrap;
}
.return {
    color: #c54b2d;
    font-size: 7px;
    line-height: 8px;
}

.site-footer {
    height: 295px;
    padding: 23px 9px 0;
    background: #2f2b2a;
    color: #f2efed;
}
.site-footer p {
    display: flex;
    justify-content: space-between;
    height: 48px;
    padding: 17px 9px 0;
    border-bottom: 1px solid #777;
    font-family: "Liberation Serif", serif;
    font-size: 15px;
    line-height: 24px;
}
.site-footer .inset {
    height: 44px;
    padding: 12px 9px 0 11px;
}
.site-footer .caps {
    font-size: 18px;
    font-variant: small-caps;
}
.site-footer span {
    font-size: 18px;
    line-height: 22px;
}
.payments {
    display: block;
    width: 222px;
    height: 22px;
    margin: 47px 0 14px 10px;
}
.site-footer small {
    display: flex;
    align-items: flex-end;
    justify-content: space-between;
    height: 26px;
    padding: 0 12px 0 8px;
    font-size: 8px;
    line-height: 14px;
    white-space: nowrap;
}
.sparkle {
    width: 24px;
    height: 26px;
}
.pay-mark {
    fill: #000;
    font-size: 14px;
    font-weight: 500;
}
.pay-mark-gray { fill: #5f6368; font-weight: 400; }
.amex-mark {
    fill: #fff;
    font-size: 6px;
    font-weight: 700;
}
.tiny-mark {
    fill: #fff;
    stroke: none;
    font-size: 4px;
    font-weight: 700;
}
```
